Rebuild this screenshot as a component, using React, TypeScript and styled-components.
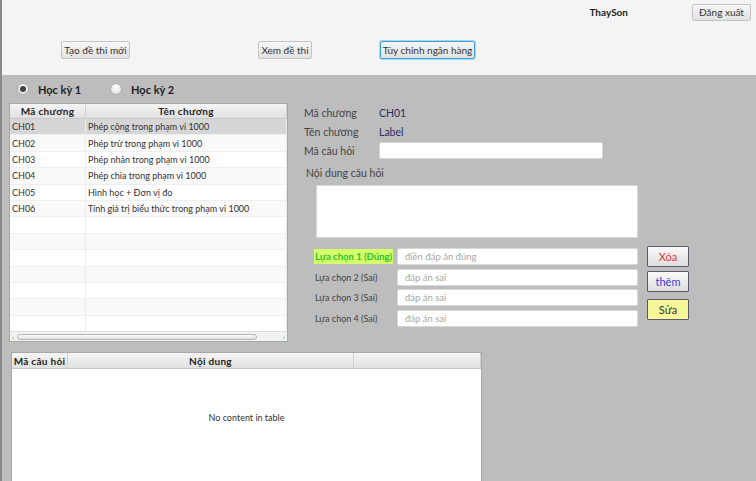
import React from "react";
import styled, { createGlobalStyle, css } from "styled-components";

const Global = createGlobalStyle`
  html, body { margin: 0; padding: 0; overflow: hidden; }
  body { font-family: Lato, "Noto Sans", sans-serif; font-size: 10px; color: #333; }
  * { box-sizing: border-box; }
`;

const Page = styled.div`
  width: 756px;
  height: 481px;
  display: flex;
  flex-direction: column;
  border-left: 2px solid #8a8a8a;
  background: #bdbdbd;
  overflow: hidden;
`;

const Top = styled.div`
  height: 75px;
  background: #f4f4f4;
  display: flex;
  flex-direction: column;
`;

const UserRow = styled.div`
  display: flex;
  justify-content: flex-end;
  align-items: center;
  padding: 3px 5px 0 0;
  height: 21px;
`;

const UserName = styled.span`
  font-weight: 700;
  font-size: 10px;
  color: #222;
  margin-right: 64px;
`;

const FxButton = styled.button<{ $w: number; $h?: number; $ml?: number; $focus?: boolean }>`
  width: ${(p) => p.$w}px;
  height: ${(p) => p.$h ?? 18}px;
  margin-left: ${(p) => p.$ml ?? 0}px;
  padding: 0;
  white-space: nowrap;
  font-family: inherit;
  font-size: 10px;
  color: #333;
  border-radius: 2px;
  border: 1px solid #c4c4c4;
  background: linear-gradient(#f7f7f7, #e2e2e2);
  ${(p) =>
    p.$focus &&
    css`
      border: 1px solid #3aa0d8;
      box-shadow: 0 0 0 1px #a8d6f0;
    `}
`;

const ActionRow = styled.div`
  display: flex;
  align-items: center;
  margin-top: 20px;
`;

const Body = styled.div`
  flex: 1;
  display: flex;
  flex-direction: column;
  padding-left: 7px;
`;

const RadioRow = styled.div`
  height: 28px;
  display: flex;
  align-items: center;
  padding-left: 8px;
  gap: 29px;
`;

const RadioItem = styled.label`
  display: flex;
  align-items: center;
  gap: 9px;
  font-weight: 700;
  font-size: 11px;
  color: #222;
`;

const RadioDot = styled.span<{ $on?: boolean }>`
  width: 12px;
  height: 12px;
  border-radius: 50%;
  background: radial-gradient(circle at 50% 35%, #ffffff, #dcdcdc);
  border: 1px solid #b0b0b0;
  display: flex;
  align-items: center;
  justify-content: center;
  &::after {
    content: "";
    width: 6px;
    height: 6px;
    border-radius: 50%;
    background: ${(p) => (p.$on ? "#444" : "transparent")};
  }
`;

const MainRow = styled.div`
  display: flex;
`;

const Table = styled.div<{ $w: number; $h: number }>`
  width: ${(p) => p.$w}px;
  height: ${(p) => p.$h}px;
  background: #fff;
  border: 1px solid #a8a8a8;
  display: flex;
  flex-direction: column;
`;

const HeaderRow = styled.div<{ $cols: string; $h?: number }>`
  display: grid;
  grid-template-columns: ${(p) => p.$cols};
  height: ${(p) => p.$h ?? 15}px;
  background: linear-gradient(#f5f5f5, #e0e0e0);
  border-bottom: 1px solid #c8c8c8;
  flex-shrink: 0;
`;

const HeaderCell = styled.div`
  display: flex;
  align-items: center;
  justify-content: center;
  font-weight: 700;
  font-size: 10px;
  letter-spacing: 0.3px;
  color: #222;
  white-space: nowrap;
  border-right: 1px solid #d0d0d0;
`;

const Row = styled.div<{ $cols: string; $sel?: boolean; $odd?: boolean }>`
  display: grid;
  grid-template-columns: ${(p) => p.$cols};
  height: 16.4px;
  background: ${(p) => (p.$sel ? "#d6d6d6" : p.$odd ? "#f9f9f9" : "#ffffff")};
  border-bottom: 1px solid #efefef;
`;

const Cell = styled.div`
  display: flex;
  align-items: center;
  padding-left: 2px;
  font-size: 9px;
  color: #333;
  white-space: nowrap;
  border-right: 1px solid #ececec;
  overflow: hidden;
`;

const Rows = styled.div`
  flex: 1;
  overflow: hidden;
`;

const HScroll = styled.div`
  height: 10px;
  display: flex;
  align-items: center;
  background: #f2f2f2;
  border-top: 1px solid #dcdcdc;
  padding: 0 2px;
  gap: 3px;
  font-size: 8px;
  color: #999;
`;

const Thumb = styled.div`
  width: 240px;
  height: 6px;
  border-radius: 3px;
  border: 1px solid #b8b8b8;
  background: linear-gradient(#fafafa, #e0e0e0);
`;

const ScrollArrow = styled.span<{ $right?: boolean }>`
  margin-left: ${(p) => (p.$right ? "auto" : "0")};
`;

const Form = styled.div`
  margin-left: 16px;
  display: flex;
  flex-direction: column;
`;

const FieldGrid = styled.div`
  display: grid;
  grid-template-columns: 75px 224px;
  grid-auto-rows: 19px;
  align-items: center;
`;

const FieldLabel = styled.span`
  font-size: 10.5px;
  color: #444;
`;

const FieldValue = styled.span`
  font-size: 10.5px;
  color: #2b2f63;
`;

const TextInput = styled.div<{ $w: number; $h?: number }>`
  width: ${(p) => p.$w}px;
  height: ${(p) => p.$h ?? 17}px;
  background: #fff;
  border: 1px solid #d8d8d8;
  border-radius: 2px;
  display: flex;
  align-items: center;
  padding-left: 7px;
  font-size: 9.5px;
  color: #a8a8a8;
`;

const ContentLabel = styled.div`
  margin: 7px 0 0 2px;
  font-size: 10.5px;
  color: #444;
`;

const TextArea = styled.div`
  margin: 6px 0 0 12px;
  width: 322px;
  height: 53px;
  background: #fff;
  border: 1px solid #d8d8d8;
`;

const ChoiceSection = styled.div`
  display: flex;
  margin: 8px 0 0 10px;
`;

const ChoiceList = styled.div`
  display: flex;
  flex-direction: column;
  gap: 3.7px;
  padding-top: 2px;
`;

const ChoiceRow = styled.div`
  display: flex;
  align-items: center;
`;

const ChoiceLabelBox = styled.div`
  width: 83px;
  display: flex;
`;

const ChoiceLabel = styled.span<{ $correct?: boolean }>`
  font-size: 9px;
  color: #444;
  padding: 1px 1px;
  white-space: nowrap;
  ${(p) =>
    p.$correct &&
    css`
      font-size: 9.5px;
      padding: 2px 1px;
      background: #d4ff6a;
      color: #2ec12e;
      font-weight: 700;
    `}
`;

const SideButtons = styled.div`
  display: flex;
  flex-direction: column;
  margin-left: 9px;
  gap: 4px;
`;

const SideButton = styled.button<{ $color: string; $bg?: string; $mt?: number }>`
  width: 42px;
  height: 21px;
  margin-top: ${(p) => p.$mt ?? 0}px;
  padding: 0;
  font-family: inherit;
  font-size: 11px;
  color: ${(p) => p.$color};
  border: 1px solid #5a5a6a;
  border-radius: 1px;
  background: ${(p) => p.$bg ?? "linear-gradient(#fafafa, #dedede)"};
`;

const BottomTable = styled.div`
  margin: 10px 0 0 2px;
  width: 471px;
  flex: 1;
  background: #fff;
  border: 1px solid #a8a8a8;
  border-bottom: none;
  display: flex;
  flex-direction: column;
`;

const Empty = styled.div`
  flex: 1;
  display: flex;
  align-items: center;
  justify-content: center;
  font-size: 9px;
  color: #333;
  padding-bottom: 16px;
`;

const chapters = [
  ["CH01", "Phép cộng trong phạm vi 1000"],
  ["CH02", "Phép trừ trong phạm vi 1000"],
  ["CH03", "Phép nhân trong phạm vi 1000"],
  ["CH04", "Phép chia trong phạm vi 1000"],
  ["CH05", "Hình học + Đơn vị đo"],
  ["CH06", "Tính giá trị biểu thức trong phạm vi 1000"],
];

const COLS = "76px 1fr";

const choices = [
  { label: "Lựa chọn 1 (Đúng)", placeholder: "điền đáp án đúng", correct: true },
  { label: "Lựa chọn 2 (Sai)", placeholder: "đáp án sai" },
  { label: "Lựa chọn 3 (Sai)", placeholder: "đáp án sai" },
  { label: "Lựa chọn 4 (Sai)", placeholder: "đáp án sai" },
];

export default function App() {
  const rows = [...chapters, ...Array.from({ length: 7 }, () => ["", ""])];
  return (
    <>
      <Global />
      <Page>
        <Top>
          <UserRow>
            <UserName>ThaySon</UserName>
            <FxButton $w={59} $h={17}>Đăng xuất</FxButton>
          </UserRow>
          <ActionRow>
            <FxButton $w={69} $ml={59}>Tạo đề thi mới</FxButton>
            <FxButton $w={54} $ml={128}>Xem đề thi</FxButton>
            <FxButton $w={95} $ml={68} $focus>Tùy chỉnh ngân hàng</FxButton>
          </ActionRow>
        </Top>
        <Body>
          <RadioRow>
            <RadioItem>
              <RadioDot $on />
              Học kỳ 1
            </RadioItem>
            <RadioItem>
              <RadioDot />
              Học kỳ 2
            </RadioItem>
          </RadioRow>
          <MainRow>
            <Table $w={279} $h={239}>
              <HeaderRow $cols={COLS}>
                <HeaderCell>Mã chương</HeaderCell>
                <HeaderCell>Tên chương</HeaderCell>
              </HeaderRow>
              <Rows>
                {rows.map((r, i) => (
                  <Row key={i} $cols={COLS} $sel={i === 0} $odd={i % 2 === 1}>
                    <Cell>{r[0]}</Cell>
                    <Cell>{r[1]}</Cell>
                  </Row>
                ))}
              </Rows>
              <HScroll>
                <ScrollArrow>‹</ScrollArrow>
                <Thumb />
                <ScrollArrow $right>›</ScrollArrow>
              </HScroll>
            </Table>
            <Form>
              <FieldGrid>
                <FieldLabel>Mã chương</FieldLabel>
                <FieldValue>CH01</FieldValue>
                <FieldLabel>Tên chương</FieldLabel>
                <FieldValue>Label</FieldValue>
                <FieldLabel>Mã câu hỏi</FieldLabel>
                <TextInput $w={224} />
              </FieldGrid>
              <ContentLabel>Nội dung câu hỏi</ContentLabel>
              <TextArea />
              <ChoiceSection>
                <ChoiceList>
                  {choices.map((c) => (
                    <ChoiceRow key={c.label}>
                      <ChoiceLabelBox>
                        <ChoiceLabel $correct={c.correct}>{c.label}</ChoiceLabel>
                      </ChoiceLabelBox>
                      <TextInput $w={241}>{c.placeholder}</TextInput>
                    </ChoiceRow>
                  ))}
                </ChoiceList>
                <SideButtons>
                  <SideButton $color="#e23a3a">Xóa</SideButton>
                  <SideButton $color="#3a3ad8">thêm</SideButton>
                  <SideButton $color="#333" $bg="#f8f89a" $mt={3}>Sửa</SideButton>
                </SideButtons>
              </ChoiceSection>
            </Form>
          </MainRow>
          <BottomTable>
            <HeaderRow $cols="56px 286px 1fr" $h={16}>
              <HeaderCell>Mã câu hỏi</HeaderCell>
              <HeaderCell>Nội dung</HeaderCell>
              <HeaderCell />
            </HeaderRow>
            <Empty>No content in table</Empty>
          </BottomTable>
        </Body>
      </Page>
    </>
  );
}
